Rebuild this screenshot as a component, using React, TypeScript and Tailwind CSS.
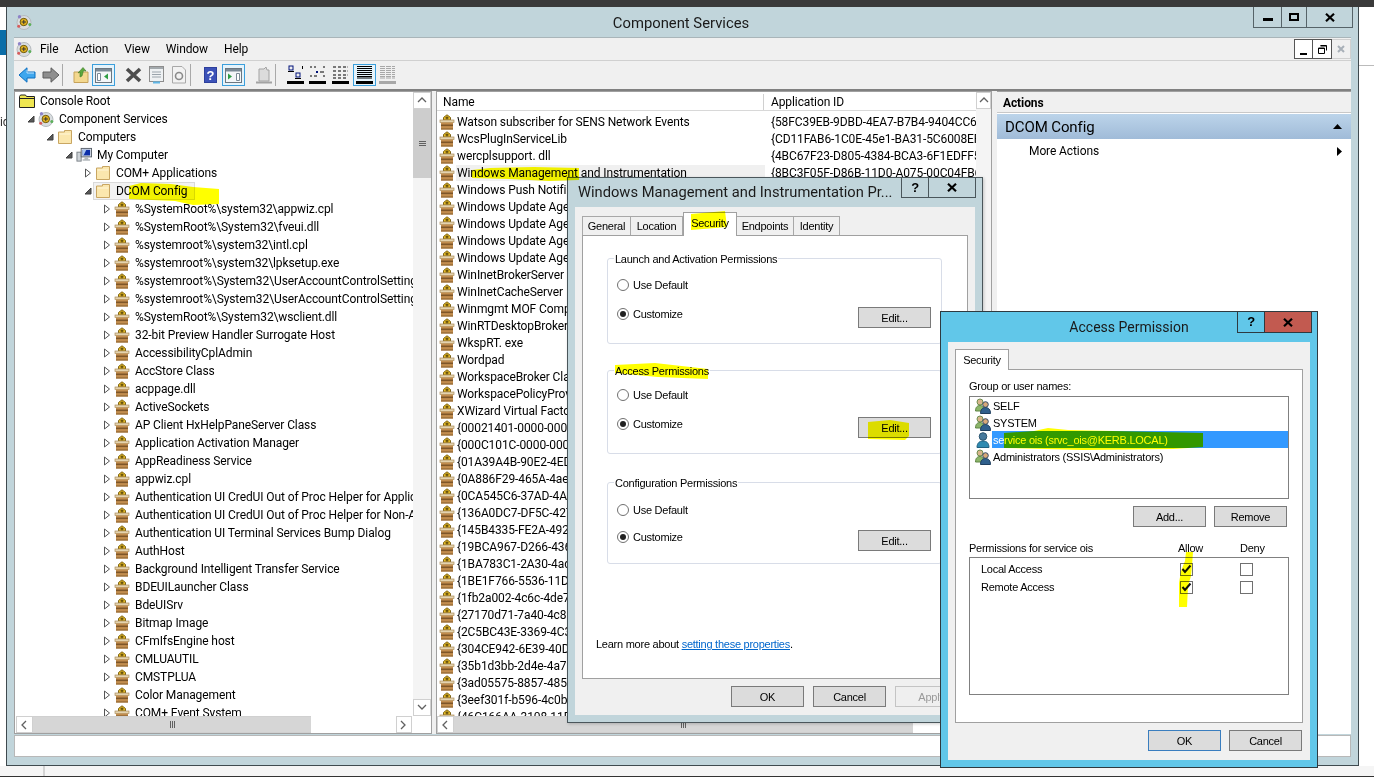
import type { ReactNode } from "react";

const treeItems = [
  "%SystemRoot%\\system32\\appwiz.cpl",
  "%SystemRoot%\\System32\\fveui.dll",
  "%systemroot%\\system32\\intl.cpl",
  "%systemroot%\\system32\\lpksetup.exe",
  "%systemroot%\\System32\\UserAccountControlSettings.dll",
  "%systemroot%\\System32\\UserAccountControlSettings.dll",
  "%SystemRoot%\\System32\\wsclient.dll",
  "32-bit Preview Handler Surrogate Host",
  "AccessibilityCplAdmin",
  "AccStore Class",
  "acppage.dll",
  "ActiveSockets",
  "AP Client HxHelpPaneServer Class",
  "Application Activation Manager",
  "AppReadiness Service",
  "appwiz.cpl",
  "Authentication UI CredUI Out of Proc Helper for Applications",
  "Authentication UI CredUI Out of Proc Helper for Non-Admin applications",
  "Authentication UI Terminal Services Bump Dialog",
  "AuthHost",
  "Background Intelligent Transfer Service",
  "BDEUILauncher Class",
  "BdeUISrv",
  "Bitmap Image",
  "CFmIfsEngine host",
  "CMLUAUTIL",
  "CMSTPLUA",
  "Color Management",
  "COM+ Event System",
];

const listItems: [string, string][] = [
  ["Watson subscriber for SENS Network Events", "{58FC39EB-9DBD-4EA7-B7B4-9404CC6A"],
  ["WcsPlugInServiceLib", "{CD11FAB6-1C0E-45e1-BA31-5C6008EF"],
  ["wercplsupport. dll", "{4BC67F23-D805-4384-BCA3-6F1EDFF5"],
  ["Windows Management and Instrumentation", "{8BC3F05F-D86B-11D0-A075-00C04FB6"],
  ["Windows Push Notifications Platform", ""],
  ["Windows Update Agent", ""],
  ["Windows Update Agent", ""],
  ["Windows Update Agent", ""],
  ["Windows Update Agent", ""],
  ["WinInetBrokerServer", ""],
  ["WinInetCacheServer", ""],
  ["Winmgmt MOF Compiler", ""],
  ["WinRTDesktopBroker", ""],
  ["WkspRT. exe", ""],
  ["Wordpad", ""],
  ["WorkspaceBroker Class", ""],
  ["WorkspacePolicyProvider", ""],
  ["XWizard Virtual Factory", ""],
  ["{00021401-0000-0000-C000", ""],
  ["{000C101C-0000-0000-C000", ""],
  ["{01A39A4B-90E2-4EDF-8A1C", ""],
  ["{0A886F29-465A-4aea-8B11", ""],
  ["{0CA545C6-37AD-4A6C-BF92", ""],
  ["{136A0DC7-DF5C-4274-9C4B", ""],
  ["{145B4335-FE2A-4927-A040", ""],
  ["{19BCA967-D266-4360-A8C2", ""],
  ["{1BA783C1-2A30-4ad3-B928", ""],
  ["{1BE1F766-5536-11D1-B726", ""],
  ["{1fb2a002-4c6c-4de7-8a4b", ""],
  ["{27170d71-7a40-4c8b-9a1c", ""],
  ["{2C5BC43E-3369-4C33-AB0C", ""],
  ["{304CE942-6E39-40D8-943A", ""],
  ["{35b1d3bb-2d4e-4a7c-9af0", ""],
  ["{3ad05575-8857-4850-9277", ""],
  ["{3eef301f-b596-4c0b-bd92", ""],
  ["{46C166AA-3108-11D4-9348", ""],
];

function Caret({ open }: { open?: boolean }) {
  return (
    <svg width="8" height="10" viewBox="0 0 8 10" className="shrink-0">
      {open ? (
        <path d="M7 2v6H1z" fill="#595959" stroke="#404040" />
      ) : (
        <path d="M1.500 1v8l5-4z" fill="#fff" stroke="#555" />
      )}
    </svg>
  );
}

function Folder({ root }: { root?: boolean }) {
  return (
    <svg width="16" height="16" viewBox="0 0 16 16" className="shrink-0">
      {root ? (
        <>
          <path d="M.5 3.500l1-1.500h5l1 1.500h8v11H.5z" fill="#efe651" stroke="#222" />
          <path d="M.5 5.500h15" stroke="#222" />
        </>
      ) : (
        <>
          <path d="M1.500 14.500V3h6V1.500h7v13z" fill="#fbe7ae" stroke="#c9a662" />
          <path d="M2.500 5h11" stroke="#fff6d8" />
        </>
      )}
    </svg>
  );
}

function PackageIcon() {
  return (
    <svg width="16" height="16" viewBox="0 0 16 16" className="shrink-0">
      <path d="M4.500 6V3.500L8 .8l3.500 2.700V6z" fill="#e9bd25" stroke="#7d6314" />
      <path d="M8 2.400v3M6.400 3.900h3.200" stroke="#4a3a08" />
      <rect x="1" y="6" width="14" height="2.500" fill="#e4d3ae" stroke="#a98c5c" strokeWidth=".7" />
      <rect x="2" y="8.500" width="12" height="7" fill="#c28d4e" />
      <rect x="2" y="10.500" width="12" height="1.600" fill="#7e5628" />
      <rect x="2" y="14.400" width="12" height="1.100" fill="#8f6531" />
    </svg>
  );
}

function ServicesIcon() {
  return (
    <svg width="16" height="16" viewBox="0 0 16 16" className="shrink-0">
      <circle cx="8" cy="8.500" r="7" fill="#d9dde0" stroke="#b4b9bd" />
      <circle cx="7.800" cy="8" r="3.700" fill="#e9b71c" stroke="#6e5a10" />
      <path d="M7.800 5.800v4.400M5.600 8H10" stroke="#333" />
      <circle cx="3.500" cy="2.800" r="1.700" fill="#8d83c8" />
      <circle cx="2.700" cy="12.300" r="1.500" fill="#d85a5a" />
      <circle cx="13.800" cy="10.500" r="1.500" fill="#5cb05a" />
    </svg>
  );
}

function ComputerIcon() {
  return (
    <svg width="16" height="16" viewBox="0 0 17 16" className="shrink-0">
      <rect x="1" y="5" width="4.500" height="9.500" fill="#cfd4d8" stroke="#7b8288" />
      <rect x="5.500" y="1" width="11" height="9" fill="#dfe3e6" stroke="#58606a" />
      <path d="M7 2.500h8V8.500H7z" fill="#0c2fa8" />
      <path d="M7 2.500h4L8 8.500H7z" fill="#a8c5ee" />
      <path d="M9 10.500h4v2h2V14H7v-1.500h2z" fill="#b2b8bc" />
    </svg>
  );
}

function Users() {
  return (
    <svg width="16" height="16" viewBox="0 0 16 16" className="shrink-0">
      <circle cx="5" cy="4" r="3" fill="#d8b58c" stroke="#6f8f50" />
      <path d="M.5 13c0-4 2-5.500 4.500-5.500S9 9 9 13z" fill="#8cb56a" stroke="#5f8444" />
      <circle cx="10.500" cy="6.500" r="2.800" fill="#d8a878" stroke="#334a66" />
      <path d="M5.500 15.500c0-4 2-6 5-6s5 2 5 6z" fill="#2f5f8c" stroke="#1f3f5f" />
    </svg>
  );
}

function User() {
  return (
    <svg width="16" height="16" viewBox="0 0 16 16" className="shrink-0">
      <circle cx="8" cy="4.500" r="3.800" fill="#46799c" stroke="#2c5570" />
      <path d="M2 15.500c0-4.500 2.500-6.500 6-6.500s6 2 6 6.500z" fill="#2f8ab0" stroke="#1f6080" />
    </svg>
  );
}

function ToolBtn({ children, active }: { children: ReactNode; active?: boolean }) {
  return (
    <div className={active ? "flex h-[22px] w-[23px] items-center justify-center border border-[#3b9fdc] bg-[#e5f3fb]" : "flex h-[22px] w-[17px] items-center justify-center"}>
      {children}
    </div>
  );
}

function Sep({ className }: { className: string }) {
  return <div className={"h-[22px] w-px shrink-0 bg-[#a9a9a9] " + className} />;
}

function WindowGlyph({ arrow, left }: { arrow: string; left?: boolean }) {
  return (
    <svg width="17" height="15" viewBox="0 0 17 15">
      <rect x=".5" y=".5" width="16" height="14" fill="#f4f6f8" stroke="#6b7680" />
      <rect x="1" y="1" width="15" height="2.500" fill="#7c8a96" />
      {left ? (
        <>
          <path d="M2.500 5.500h3v7h-3z" fill="#fff" stroke="#7c8a96" />
          <path d="M13 5.500v6l-4-3z" fill={arrow} />
        </>
      ) : (
        <>
          <path d="M3 5.500v6l4-3z" fill={arrow} />
          <path d="M11.500 5.500h3v7h-3z" fill="#fff" stroke="#7c8a96" />
        </>
      )}
    </svg>
  );
}

function ViewGlyph({ mode, muted }: { mode: "large" | "small" | "list" | "detail" | "filter"; muted?: boolean }) {
  const c = muted ? "#a8a8a8" : "#000";
  let inner: ReactNode = null;
  if (mode === "large")
    inner = (
      <>
        <rect x="2" y="1" width="4" height="4" fill="none" stroke="#00127a" />
        <rect x="9" y="8" width="4" height="4" fill="none" stroke="#00127a" />
        <path d="M1 6.500h6M8 13.500h6M15.500 1v3" stroke={c} />
      </>
    );
  if (mode === "small")
    inner = (
      <>
        <path d="M1 2h2M5 2h2M7 7h2M11 7h4M1 11h2M5 11h3M15 1v2M15 10v2" stroke={c} />
        <rect x="7" y="6" width="2" height="2" fill="#00127a" />
      </>
    );
  if (mode === "list")
    inner = (
      <path d="M1 2h3M6 2h3M11 2h3M15.500 2h.5M1 6h3M6 6h3M11 6h3M15.500 6h.5M1 10h3M6 10h3M11 10h3M15.500 10h.5M1 13h3M6 13h3M11 13h3" stroke={c} strokeWidth="1.200" />
    );
  if (mode === "detail" || mode === "filter")
    inner = (
      <path d="M1 1.500h15M1 3.500h15M1 5.500h15M1 7.500h15M1 9.500h15M1 11.500h15M1 13h15" stroke={c} strokeWidth="1.100" strokeDasharray={mode === "filter" ? "5 1" : undefined} />
    );
  return (
    <svg width="17" height="20" viewBox="0 0 17 20">
      {inner}
      <rect x="0" y="16" width="17" height="3" fill={c} />
    </svg>
  );
}

function Toolbar() {
  return (
    <div className="flex h-[29px] shrink-0 items-center border-t border-[#d0d0d0] bg-[#f0f0f0] pl-[3px]">
      <div className="flex w-[19px] justify-center">
        <svg width="18" height="16" viewBox="0 0 18 16">
          <path d="M9 .8L1 8l8 7.200V11h8V5H9z" fill="#3fa7ee" stroke="#0d6fc0" />
          <path d="M9 2.800V6h7" fill="none" stroke="#bde3ff" />
        </svg>
      </div>
      <div className="ml-[5px] flex w-[19px] justify-center">
        <svg width="18" height="16" viewBox="0 0 18 16">
          <path d="M9 .8L17 8l-8 7.200V11H1V5h8z" fill="#8e8e8e" stroke="#5d5d5d" />
        </svg>
      </div>
      <Sep className="ml-[2px]" />
      <div className="ml-[10px] w-[15px]">
        <svg width="16" height="18" viewBox="0 0 16 18">
          <path d="M1 6h14v10.500H1z" fill="#f3d88f" stroke="#c6a25a" />
          <path d="M7 11V6L5 7l5-5.500L13 5l-2.500-.5L9 10z" fill="#5ca83e" stroke="#3a7a25" strokeWidth=".6" />
        </svg>
      </div>
      <div className="ml-[4px]">
        <ToolBtn active>
          <WindowGlyph arrow="#2f9e44" left />
        </ToolBtn>
      </div>
      <div className="ml-[10px]">
        <ToolBtn>
          <svg width="17" height="16" viewBox="0 0 17 16">
            <path d="M2 2l13 12M15 2L2 14" stroke="#4d4d4d" strokeWidth="3.600" />
          </svg>
        </ToolBtn>
      </div>
      <div className="ml-[6px]">
        <ToolBtn>
          <svg width="15" height="18" viewBox="0 0 15 18">
            <rect x=".5" y=".5" width="14" height="15" fill="#eef1f3" stroke="#8d8d8d" />
            <rect x="1" y="1" width="13" height="2" fill="#a3a9ad" />
            <path d="M3 6h9M3 8.500h9M3 11h9" stroke="#9aa4ac" />
            <path d="M4 16.500h7" stroke="#5fb6e6" strokeWidth="2" />
          </svg>
        </ToolBtn>
      </div>
      <div className="ml-[5px]">
        <ToolBtn>
          <svg width="14" height="18" viewBox="0 0 14 18">
            <path d="M.5.500H10L13.500 4v13H.5z" fill="#f2f2f2" stroke="#a8a8a8" />
            <circle cx="7" cy="10" r="3.500" fill="none" stroke="#8a8a8a" strokeWidth="1.600" />
          </svg>
        </ToolBtn>
      </div>
      <Sep className="ml-[3px]" />
      <div className="ml-[13px] w-[13px]">
        <svg width="13" height="16" viewBox="0 0 13 16">
          <rect width="13" height="16" fill="#2d3f9c" />
          <rect x="1" y="1" width="11" height="14" fill="#3c52b8" />
          <text x="6.500" y="13" fontSize="13" fontWeight="700" textAnchor="middle" fill="#fff" fontFamily="Liberation Sans, sans-serif">?</text>
        </svg>
      </div>
      <div className="ml-[5px]">
        <ToolBtn active>
          <WindowGlyph arrow="#2f9e44" />
        </ToolBtn>
      </div>
      <div className="ml-[10px]">
        <ToolBtn>
          <svg width="16" height="18" viewBox="0 0 16 18">
            <path d="M3 15V3h5l2-2 1 3h2v11z" fill="#dcdcdc" stroke="#a3a3a3" />
            <path d="M0 16.500h16" stroke="#a3a3a3" strokeWidth="2" />
          </svg>
        </ToolBtn>
      </div>
      <Sep className="ml-[3px]" />
      <div className="ml-[11px]"><ViewGlyph mode="large" /></div>
      <div className="ml-[5px]"><ViewGlyph mode="small" /></div>
      <div className="ml-[6px]"><ViewGlyph mode="list" /></div>
      <div className="ml-[4px] flex h-[22px] w-[23px] items-center justify-center border border-[#3b9fdc] bg-[#e5f3fb]"><ViewGlyph mode="detail" /></div>
      <div className="ml-[3px]"><ViewGlyph mode="filter" muted /></div>
    </div>
  );
}

function Chevron({ dir, className }: { dir: "up" | "down" | "left" | "right"; className: string }) {
  const d = {
    up: "M1 6l4-4 4 4",
    down: "M1 2l4 4 4-4",
    left: "M6 1L2 5l4 4",
    right: "M2 1l4 4-4 4",
  }[dir];
  return (
    <div className={"flex shrink-0 items-center justify-center border border-[#d0d0d0] bg-white " + className}>
      <svg width="10" height="10" viewBox="0 0 10 10">
        <path d={d} fill="none" stroke="#606060" strokeWidth="1.300" />
      </svg>
    </div>
  );
}

function Grip({ vertical }: { vertical?: boolean }) {
  return vertical ? (
    <div className="flex w-[7px] flex-col gap-px">
      <div className="h-px bg-[#606060]" />
      <div className="h-px bg-[#606060]" />
      <div className="h-px bg-[#606060]" />
    </div>
  ) : (
    <div className="flex h-[7px] gap-px">
      <div className="w-px bg-[#606060]" />
      <div className="w-px bg-[#606060]" />
      <div className="w-px bg-[#606060]" />
    </div>
  );
}

function TreeRow({ level, open, icon, label, selected }: { level: number; open?: boolean; icon: ReactNode; label: string; selected?: boolean }) {
  return (
    <div className="flex h-[18px] w-max items-center whitespace-nowrap" style={{ paddingLeft: level * 19 + 12 }}>
      <div className="flex w-[11px] shrink-0 justify-start"><Caret open={open} /></div>
      <div className={selected ? "-ml-[2px] flex h-[18px] w-[102px] items-center border border-[#d9d9d9] bg-[#f2f2f2] pl-px" : "flex h-[18px] items-center"}>
        {icon}
        <span className="ml-[5px]">{label}</span>
      </div>
    </div>
  );
}

function TreePane() {
  return (
    <div className="flex h-full w-[418px] shrink-0 flex-col border border-[#a0a0a0] bg-white">
      <div className="flex min-h-0 flex-1">
        <div className="min-w-0 flex-1 overflow-hidden">
          <div className="flex h-[18px] items-center pl-[4px]">
            <Folder root />
            <span className="ml-[5px]">Console Root</span>
          </div>
          <TreeRow level={0} open icon={<ServicesIcon />} label="Component Services" />
          <TreeRow level={1} open icon={<Folder />} label="Computers" />
          <TreeRow level={2} open icon={<ComputerIcon />} label="My Computer" />
          <TreeRow level={3} icon={<Folder />} label="COM+ Applications" />
          <TreeRow level={3} open icon={<Folder />} label="DCOM Config" selected />
          {treeItems.map((t, i) => (
            <TreeRow key={i} level={4} icon={<PackageIcon />} label={t} />
          ))}
        </div>
        <div className="flex w-[18px] shrink-0 flex-col bg-[#f4f4f4]">
          <Chevron dir="up" className="h-[17px]" />
          <div className="flex h-[69px] items-center justify-center bg-[#cdcdcd]"><Grip vertical /></div>
          <div className="flex-1" />
          <Chevron dir="down" className="h-[17px]" />
        </div>
      </div>
      <div className="flex h-[17px] shrink-0 pl-px pr-[19px]">
        <Chevron dir="left" className="w-[17px]" />
        <div className="flex w-[278px] items-center justify-center border-y border-[#d0d0d0] bg-[#d6d6d6]"><Grip /></div>
        <div className="flex-1 bg-white" />
        <Chevron dir="right" className="w-[16px]" />
      </div>
    </div>
  );
}

function ListPane() {
  return (
    <div className="ml-[4px] flex h-full w-[556px] shrink-0 flex-col border border-[#a0a0a0] bg-white">
      <div className="flex min-h-0 flex-1">
        <div className="min-w-0 flex-1 overflow-hidden">
          <div className="flex h-[19px] items-center border-b border-[#d8d8d8] pt-px">
            <div className="w-[327px] border-r border-[#d0d0d0] pl-[6px]">Name</div>
            <div className="pl-[7px]">Application ID</div>
          </div>
          <div className="pt-[2px]">
            {listItems.map(([name, id], i) => (
              <div key={i} className="flex h-[17px] items-center whitespace-nowrap">
                <div className="pl-[2px]"><PackageIcon /></div>
                <div className={i === 3 ? "ml-px w-[309px] shrink-0 bg-[#f0f0f0] pl-px" : "ml-px w-[309px] shrink-0 pl-px"}>{name}</div>
                <div className="ml-[6px]">{id}</div>
              </div>
            ))}
          </div>
        </div>
        <div className="flex w-[15px] shrink-0 flex-col bg-[#f4f4f4]">
          <Chevron dir="up" className="h-[17px]" />
        </div>
      </div>
      <div className="flex h-[17px] shrink-0">
        <Chevron dir="left" className="w-[17px]" />
        <div className="flex w-[459px] items-center justify-center border-y border-[#d0d0d0] bg-[#d6d6d6]"><Grip /></div>
        <div className="flex-1 bg-white" />
      </div>
    </div>
  );
}

function ActionsPane() {
  return (
    <div className="ml-[5px] flex h-full min-w-0 flex-1 flex-col border-t border-[#a0a0a0] bg-white">
      <div className="flex h-[21px] items-center border-b border-[#c8c8c8] bg-[#f0f0f0] pl-[6px] pt-px font-bold">Actions</div>
      <div className="mt-px flex h-[25px] items-center justify-between bg-gradient-to-b from-[#bcd4ea] to-[#a0bbd8] pl-[8px] pr-[9px] text-[15px]">
        <span>DCOM Config</span>
        <svg width="9" height="5" viewBox="0 0 9 5"><path d="M0 5l4.500-5L9 5z" fill="#000" /></svg>
      </div>
      <div className="flex h-[24px] items-center justify-between pl-[32px] pr-[9px]">
        <span>More Actions</span>
        <svg width="5" height="9" viewBox="0 0 5 9"><path d="M0 0l5 4.500L0 9z" fill="#000" /></svg>
      </div>
    </div>
  );
}

function WinButton({ className, children }: { className: string; children: ReactNode }) {
  return <div className={"flex h-full items-center justify-center " + className}>{children}</div>;
}

const closeGlyph = (
  <svg width="10" height="9" viewBox="0 0 10 9">
    <path d="M1 .8l8 7.400M9 .8L1 8.200" stroke="#000" strokeWidth="2.200" />
  </svg>
);

function MainWindow() {
  return (
    <div className="flex h-[759px] w-[1353px] shrink-0 flex-col border-x border-b border-[#3f4a4f] bg-[#c1d5db]">
      <div className="grid h-[30px] shrink-0 grid-cols-[1fr_auto_1fr]">
        <div className="pl-[9px] pt-[7px]"><ServicesIcon /></div>
        <div className="self-center pr-[3px] pt-[2px] text-[14.800px] tracking-normal text-[#1a1a1a]">Component Services</div>
        <div className="flex h-[21px] justify-end pr-[5px]">
          <div className="flex h-full border-x border-b border-[#566368]">
            <WinButton className="w-[28px] border-r border-[#566368]"><div className="mt-[5px] h-[3px] w-[10px] bg-black" /></WinButton>
            <WinButton className="w-[25px] border-r border-[#566368]"><div className="h-[8px] w-[10px] border-2 border-black" /></WinButton>
            <WinButton className="w-[45px]">{closeGlyph}</WinButton>
          </div>
        </div>
      </div>
      <div className="flex min-h-0 flex-1 flex-col px-[7px] pb-[8px]">
        <div className="flex h-[23px] shrink-0 items-center border-t border-[#a9b5b9] bg-[#f0f0f0] pl-[2px]">
          <ServicesIcon />
          <div className="ml-[8px] flex gap-[16px]">
            <span>File</span>
            <span>Action</span>
            <span>View</span>
            <span>Window</span>
            <span>Help</span>
          </div>
          <div className="ml-auto mt-px flex h-[20px] self-start">
            <div className="flex w-[19px] items-end justify-center border border-[#555] bg-white pb-[3px]"><div className="h-[2px] w-[7px] bg-black" /></div>
            <div className="flex w-[19px] items-center justify-center border-y border-r border-[#555] bg-white">
              <svg width="9" height="9" viewBox="0 0 9 9"><path d="M2.500.5h6v5M.5 3h6v5.500h-6z" fill="none" stroke="#000" /><path d="M.5 3.500h6M2.500 1h6" stroke="#000" /></svg>
            </div>
            <div className="flex w-[19px] items-center justify-center border-y border-r border-[#d0d0d0]">
              <svg width="8" height="8" viewBox="0 0 8 8"><path d="M1 1l6 6M7 1L1 7" stroke="#a8b0b8" strokeWidth="2" /></svg>
            </div>
          </div>
        </div>
        <Toolbar />
        <div className="flex min-h-0 flex-1 border-t-2 border-[#808080] bg-[#f0f0f0]">
          <TreePane />
          <ListPane />
          <ActionsPane />
        </div>
        <div className="mt-px h-[22px] shrink-0 border border-[#b8b8b8] bg-white" />
      </div>
    </div>
  );
}

function Btn({ children, kind, className }: { children: ReactNode; kind?: "default" | "disabled"; className?: string }) {
  const look =
    kind === "default"
      ? "border-[#3a7ebf] bg-[#dcdcdc]"
      : kind === "disabled"
        ? "border-[#c4c4c4] bg-[#efefef] text-[#9a9a9a]"
        : "border-[#7a7a7a] bg-[#dcdcdc]";
  return <div className={"flex h-[21px] w-[73px] shrink-0 items-center justify-center border " + look + " " + (className ?? "")}>{children}</div>;
}

function Radio({ checked, label }: { checked?: boolean; label: string }) {
  return (
    <div className="flex h-[16px] items-center gap-[4px]">
      <div className="flex h-[12px] w-[12px] items-center justify-center rounded-full border border-[#707070] bg-white">
        {checked && <div className="h-[6px] w-[6px] rounded-full bg-[#202020]" />}
      </div>
      <span>{label}</span>
    </div>
  );
}

function Group({ title, className, top, gap }: { title: string; className: string; top: string; gap: string }) {
  return (
    <div className={"relative w-[335px] shrink-0 rounded-[3px] border border-[#d8dde8] pl-[9px] pr-[10px] " + className}>
      <span className="absolute left-[6px] top-[-8px] bg-white px-px leading-[16px]">{title}</span>
      <div className={top}><Radio label="Use Default" /></div>
      <div className={"flex items-start justify-between " + gap}>
        <Radio checked label="Customize" />
        <Btn className="mt-px">Edit...</Btn>
      </div>
    </div>
  );
}

function PropsDialog() {
  const tabs = ["General", "Location", "Security", "Endpoints", "Identity"];
  const widths = ["w-[49px]", "w-[52px]", "w-[54px]", "w-[57px]", "w-[46px]"];
  return (
    <div className="absolute left-[567px] top-[177px] flex h-[546px] w-[416px] flex-col border border-[#4a565b] bg-[#c1d5db] font-[family-name:'Liberation_Sans',sans-serif] text-[11px] tracking-[-0.25px] shadow-[1px_1px_3px_rgba(0,0,0,0.2)]">
      <div className="flex h-[29px] shrink-0 items-start justify-between pr-[6px]">
        <span className="whitespace-nowrap pl-[10px] pt-[3px] font-[family-name:Roboto,sans-serif] text-[14.700px] leading-[22px] tracking-normal text-[#1a1a1a]">Windows Management and Instrumentation Pr...</span>
        <div className="flex h-[20px] shrink-0 border-x border-b border-[#4a565b]">
          <div className="flex w-[27px] items-center justify-center border-r border-[#4a565b] text-[13px] font-bold">?</div>
          <div className="flex w-[46px] items-center justify-center">{closeGlyph}</div>
        </div>
      </div>
      <div className="mx-[7px] mb-[7px] flex min-h-0 flex-1 flex-col bg-[#f0f0f0] px-[7px] pt-[7px]">
        <div className="relative z-10 flex h-[21px] items-end">
          {tabs.map((t, i) =>
            i === 2 ? (
              <div key={t} className={"-mb-px flex h-[24px] items-start justify-center border-x border-t border-[#a0a0a0] bg-white pt-[2px] " + widths[i]}>{t}</div>
            ) : (
              <div key={t} className={"flex h-[19px] items-center justify-center border-t border-r border-[#a8a8a8] first:border-l " + widths[i]}>{t}</div>
            ),
          )}
        </div>
        <div className="flex h-[444px] w-[386px] shrink-0 flex-col border border-[#a0a0a0] bg-white px-[24px] pt-[22px]">
          <Group title="Launch and Activation Permissions" className="h-[86px]" top="mt-[18px]" gap="mt-[13px]" />
          <Group title="Access Permissions" className="mt-[26px] h-[84px]" top="mt-[16px]" gap="mt-[13px]" />
          <Group title="Configuration Permissions" className="mt-[28px] h-[82px]" top="mt-[19px]" gap="mt-[11px]" />
          <div className="-ml-[11px] mt-[72px]">
            Learn more about <span className="text-[#0066cc] underline">setting these properties</span>.
          </div>
        </div>
        <div className="mt-[7px] flex gap-[9px] pl-[149px]">
          <Btn>OK</Btn>
          <Btn>Cancel</Btn>
          <Btn kind="disabled">Apply</Btn>
        </div>
      </div>
    </div>
  );
}

function CheckBox({ checked }: { checked?: boolean }) {
  return (
    <div className="flex h-[13px] w-[13px] items-center justify-center border border-[#707070] bg-white">
      {checked && (
        <svg width="11" height="10" viewBox="0 0 11 10">
          <path d="M1.500 5l2.500 3L9.500 1.500" fill="none" stroke="#111" strokeWidth="2" />
        </svg>
      )}
    </div>
  );
}

function AccessDialog() {
  const names = [
    { name: "SELF", icon: <Users /> },
    { name: "SYSTEM", icon: <Users /> },
    { name: "service ois (srvc_ois@KERB.LOCAL)", icon: <User />, selected: true },
    { name: "Administrators (SSIS\\Administrators)", icon: <Users /> },
  ];
  return (
    <div className="absolute left-[940px] top-[311px] flex h-[457px] w-[378px] flex-col border border-[#2e3a40] bg-[#61c7e9] font-[family-name:'Liberation_Sans',sans-serif] text-[11px] tracking-[-0.25px]">
      <div className="relative flex h-[30px] shrink-0 items-center justify-center">
        <span className="font-[family-name:Roboto,sans-serif] text-[14px] leading-[28px] tracking-normal text-[#1a1a1a]">Access Permission</span>
        <div className="absolute right-[5px] top-0 flex h-[21px] border-x border-b border-[#2e3a40]">
          <div className="flex w-[27px] items-center justify-center border-r border-[#2e3a40] text-[13px] font-bold">?</div>
          <div className="flex w-[46px] items-center justify-center bg-[#c25a50]">{closeGlyph}</div>
        </div>
      </div>
      <div className="mx-[7px] mb-[7px] flex min-h-0 flex-1 flex-col bg-[#f0f0f0] px-[7px] pt-[7px]">
        <div className="relative z-10 -mb-px flex h-[21px] w-[54px] items-center justify-center border-x border-t border-[#a0a0a0] bg-white">Security</div>
        <div className="flex h-[354px] w-[348px] shrink-0 flex-col border border-[#a0a0a0] bg-white px-[13px] pt-[8px]">
          <div className="h-[16px] leading-[16px]">Group or user names:</div>
          <div className="mt-[2px] h-[103px] w-[320px] shrink-0 border border-[#808080] pl-[5px]">
            {names.map((n) => (
              <div key={n.name} className="flex h-[17px] items-center">
                {n.icon}
                {n.selected ? (
                  <div className="ml-[1px] flex h-[17px] flex-1 items-center bg-[#3399ff] pl-[1px] text-white">{n.name}</div>
                ) : (
                  <span className="ml-[2px]">{n.name}</span>
                )}
              </div>
            ))}
          </div>
          <div className="mt-[7px] flex w-[318px] justify-end gap-[8px]">
            <Btn>Add...</Btn>
            <Btn>Remove</Btn>
          </div>
          <div className="mt-[13px] flex h-[16px] w-[320px] items-center">
            <span className="flex-1">Permissions for service ois</span>
            <span className="w-[62px]">Allow</span>
            <span className="w-[49px]">Deny</span>
          </div>
          <div className="mt-px h-[138px] w-[320px] shrink-0 border border-[#808080] pt-[2px]">
            {["Local Access", "Remote Access"].map((p) => (
              <div key={p} className="flex h-[18px] items-center">
                <span className="w-[210px] pl-[11px]">{p}</span>
                <CheckBox checked />
                <div className="ml-[47px]"><CheckBox /></div>
              </div>
            ))}
          </div>
        </div>
        <div className="mt-[7px] flex justify-end gap-[8px] pr-[1px]">
          <Btn kind="default">OK</Btn>
          <Btn>Cancel</Btn>
        </div>
      </div>
    </div>
  );
}

// marker strokes someone drew over the screenshot
function Marker() {
  return (
    <svg width="1374" height="777" viewBox="0 0 1374 777" className="pointer-events-none absolute left-0 top-0 z-20 mix-blend-multiply">
      <g fill="#ffff00">
        <path d="M129 186l12-3 30 1 22 3 26 2 0 15-26 1-18-4-46-2z" />
        <path d="M472 170l18-2 44-1 45 1 0 12-30 1-40-2-37-1z" />
        <path d="M691 214l34-3 2 16-36 3z" />
        <path d="M615 365l40-2 53 6 0 10-50-2-43-4z" />
        <path d="M868 422l22-2 19 3 0 13-4 4-37-1z" />
        <path d="M1004 433l30-2 14-3 20 2 135 3 0 14-30 2-90 1-79-2z" />
        <path d="M1186 552h7l-1 14-1 10-3 10-1 21h-8v-24l2-12 4-10z" />
      </g>
    </svg>
  );
}

export default function App() {
  return (
    <div className="relative h-[777px] w-[1374px] overflow-hidden bg-[#f5f5f5] font-[family-name:Roboto,sans-serif] text-[12px] leading-[16px] tracking-[-0.1px] text-black">
      <div className="h-[7px] bg-[#3a3a3a]" />
      <div className="flex h-[759px]">
        <div className="w-[6px] shrink-0 overflow-hidden bg-white pt-[23px]">
          <div className="h-[25px] bg-[#0a6ea8]" />
          <div className="mt-[59px] text-[#333]">id</div>
        </div>
        <MainWindow />
        <div className="flex-1 bg-white pt-[58px]">
          <div className="h-px bg-[#bbbbbb]" />
        </div>
      </div>
      <div className="flex h-[10px]">
        <div className="ml-[43px] w-[2px] bg-[#d4d4d4]" />
      </div>
      <div className="h-px bg-[#333333]" />
      <PropsDialog />
      <AccessDialog />
      <Marker />
    </div>
  );
}
